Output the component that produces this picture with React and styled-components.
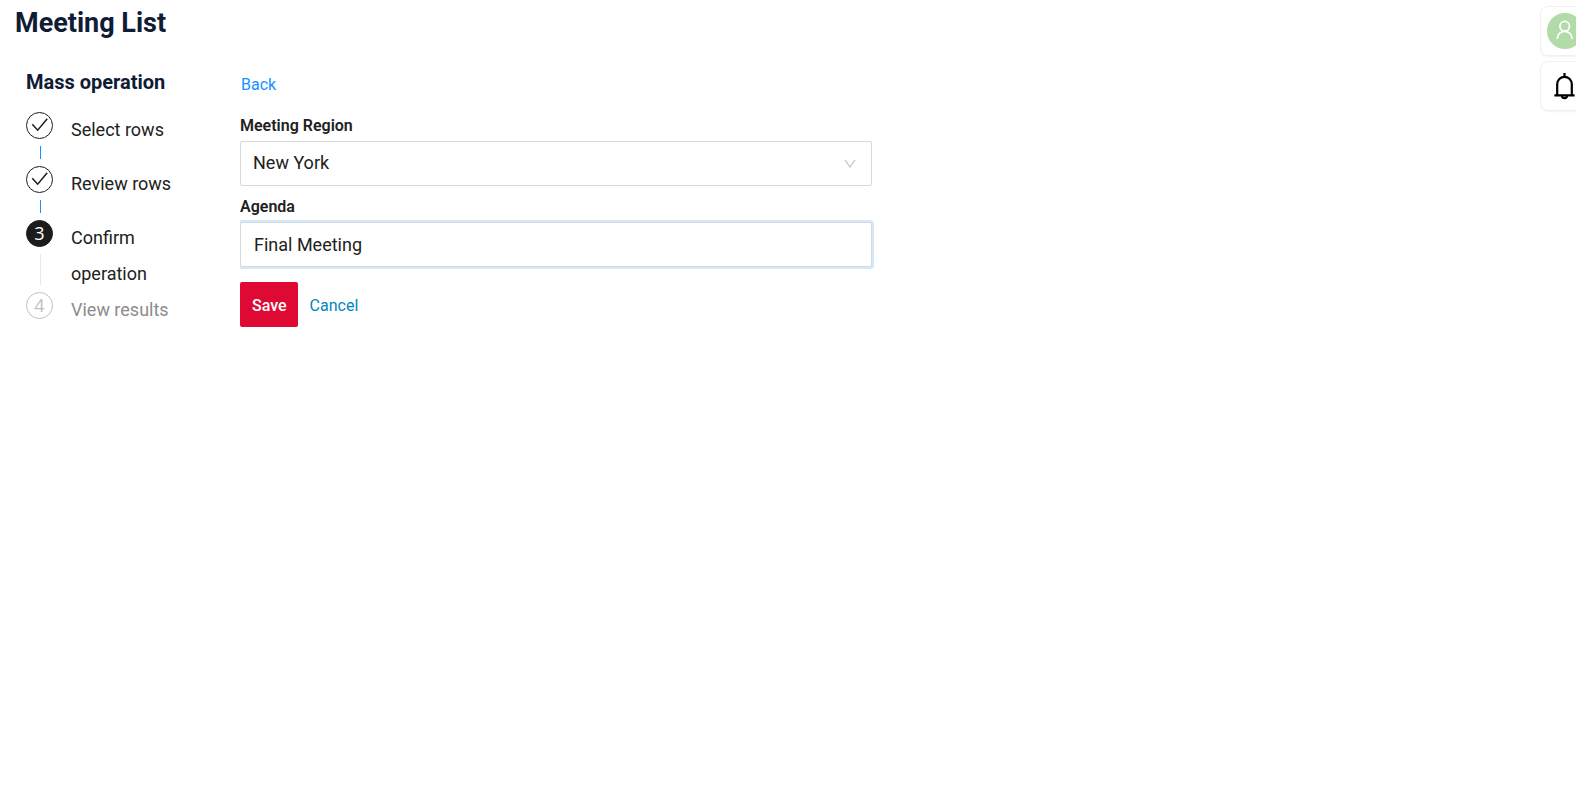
import React, { useState } from 'react';
import styled, { createGlobalStyle } from 'styled-components';

const GlobalStyle = createGlobalStyle`
  *,
  *::before,
  *::after {
    box-sizing: border-box;
  }
  body {
    margin: 0;
    background: #fff;
    color: #212121;
    font-family: Roboto, 'Liberation Sans', sans-serif;
    font-size: 16px;
    line-height: 24px;
  }
`;

const Page = styled.div`
  min-height: 100vh;
  padding: 4px 0 0 15px;
  overflow: hidden;
`;
const Title = styled.h1`
  margin: 0;
  color: #0f1c35;
  font-size: 27px;
  font-weight: 700;
  line-height: 38px;
`;
const Layout = styled.div`
  display: flex;
  align-items: flex-start;
  padding: 24px 80px 24px 11px;
`;
const Sidebar = styled.aside`
  flex: 0 0 214px;
  padding-right: 50px;
`;
const SidebarTitle = styled.h2`
  margin: 0 0 14px;
  color: #0f1c35;
  font-size: 20px;
  font-weight: 700;
  line-height: 32px;
`;
const StepList = styled.ol`
  margin: 0;
  padding: 0;
  list-style: none;
`;
const Step = styled.li`
  display: flex;
  gap: 18px;
  min-height: 54px;
`;
const StepRail = styled.div`
  display: flex;
  flex-direction: column;
  gap: 7px;
  padding-bottom: 7px;
`;
const StepIcon = styled.span`
  display: flex;
  flex: none;
  align-items: center;
  justify-content: center;
  width: 27px;
  height: 27px;
  border: 1px solid ${(props) => (props.$status === 'wait' ? '#bfbfbf' : '#1c1c1c')};
  border-radius: 50%;
  background: ${(props) => (props.$status === 'process' ? '#1c1c1c' : '#fff')};
  color: ${(props) => (props.$status === 'process' ? '#fff' : '#bfbfbf')};
  font-family: 'Open Sans', 'Noto Sans', sans-serif;
  font-size: 18px;
  line-height: 25px;
`;
const StepTail = styled.span`
  flex: 1;
  width: 1px;
  margin-left: 14px;
  background: ${(props) => (props.$done ? '#1890ff' : '#e8e8e8')};
`;
const StepText = styled.span`
  color: ${(props) => (props.$status === 'wait' ? '#8c8c8c' : '#212121')};
  font-size: 18px;
  line-height: 36px;
`;
const MeetingForm = styled.form`
  flex: 1;
  min-width: 0;
  max-width: 634px;
  padding: 7px 2px 0 0;
  overflow: hidden;
`;
const BackLink = styled.a`
  display: block;
  width: fit-content;
  margin: 0 0 17px 1px;
  color: #1890ff;
  text-decoration: none;
`;
const Label = styled.label`
  display: block;
  margin-bottom: 3px;
  font-weight: 600;
`;
const Control = styled.div`
  position: relative;
  margin-bottom: ${(props) => (props.$last ? '15px' : '9px')};
`;
const Select = styled.select`
  display: block;
  width: 100%;
  height: 45px;
  padding: 0 40px 2px 12px;
  border: 1px solid #d9d9d9;
  border-radius: 2px;
  outline: none;
  appearance: none;
  background: #fff;
  color: #212121;
  font-family: inherit;
  font-size: 18px;
`;
const Chevron = styled.svg`
  position: absolute;
  top: 17px;
  right: 16px;
  color: #bfbfbf;
  pointer-events: none;
`;
const Input = styled.input`
  display: block;
  width: 100%;
  height: 45px;
  padding: 0 13px;
  border: 1px solid #d9d9d9;
  border-radius: 2px;
  outline: none;
  box-shadow: 0 0 0 2px rgba(24, 144, 255, 0.2);
  color: #212121;
  font-family: inherit;
  font-size: 18px;
`;
const Actions = styled.div`
  display: flex;
  align-items: center;
  gap: 12px;
`;
const SaveButton = styled.button`
  height: 45px;
  padding: 2px 11px 0 12px;
  border: 0;
  border-radius: 2px;
  background: #df0a34;
  color: #fff;
  font-family: inherit;
  font-size: 16px;
  font-weight: 500;
  cursor: pointer;
`;
const CancelButton = styled.button`
  padding: 2px 0 0;
  border: 0;
  background: none;
  color: #0086bf;
  font-family: inherit;
  font-size: 16px;
  line-height: 24px;
  cursor: pointer;
`;
const Dock = styled.div`
  position: fixed;
  top: 6px;
  right: -14px;
  display: grid;
  gap: 5px;
`;
const DockButton = styled.button`
  display: flex;
  align-items: center;
  width: 50px;
  height: 50px;
  padding: 0 6px;
  border: 1px solid #f0f0f0;
  border-radius: 8px;
  background: #fff;
  box-shadow: 0 1px 2px rgba(0, 0, 0, 0.05);
  color: #000;
  cursor: pointer;
`;
const DockIcon = styled.svg`
  flex: none;
`;

const steps = [
  { title: 'Select rows', status: 'finish' },
  { title: 'Review rows', status: 'finish' },
  { title: 'Confirm operation', status: 'process' },
  { title: 'View results', status: 'wait' },
];

const CheckIcon = () => (
  <svg width="17" height="15" viewBox="0 0 17 15" fill="none" aria-label="done">
    <path d="M1.3 6.2L6.7 12.2 16.2 0.8" stroke="#1c1c1c" strokeWidth="1.5" />
  </svg>
);

const AvatarIcon = () => (
  <DockIcon width="36" height="36" viewBox="0 0 36 36" fill="none" stroke="#fff" strokeWidth="1.8">
    <circle cx="18" cy="18" r="18" fill="#b1dca8" stroke="none" />
    <circle cx="17.7" cy="13.2" r="4.8" />
    <path d="M10.2 26c.4-4.7 3.5-7.7 7.5-7.7s7.1 3 7.5 7.7" />
  </DockIcon>
);

const BellIcon = () => (
  <DockIcon
    width="36"
    height="28"
    viewBox="0 0 36 28"
    fill="none"
    stroke="currentColor"
    strokeWidth="2.2"
  >
    <path d="M10.2 23V12.2a7.3 7.3 0 0 1 14.6 0V23" />
    <path d="M7.4 23.3h20.2M17.5 1v4" />
    <path d="M14.9 23.5a2.6 2.6 0 0 0 5.2 0" />
  </DockIcon>
);

const StepItem = ({ step, number, last }) => (
  <Step aria-current={step.status === 'process' ? 'step' : undefined}>
    <StepRail>
      <StepIcon $status={step.status}>{step.status === 'finish' ? <CheckIcon /> : number}</StepIcon>
      {!last && <StepTail $done={step.status === 'finish'} />}
    </StepRail>
    <StepText $status={step.status}>{step.title}</StepText>
  </Step>
);

const App = () => {
  const [region, setRegion] = useState('New York');
  const [agenda, setAgenda] = useState('Final Meeting');

  return (
    <Page>
      <GlobalStyle />
      <Title>Meeting List</Title>
      <Layout>
        <Sidebar>
          <SidebarTitle>Mass operation</SidebarTitle>
          <StepList>
            {steps.map((step, index) => (
              <StepItem
                key={step.title}
                step={step}
                number={index + 1}
                last={index === steps.length - 1}
              />
            ))}
          </StepList>
        </Sidebar>
        <MeetingForm onSubmit={(e) => e.preventDefault()}>
          <BackLink href="#back">Back</BackLink>
          <Label htmlFor="region">Meeting Region</Label>
          <Control>
            <Select id="region" value={region} onChange={(e) => setRegion(e.target.value)}>
              <option>New York</option>
            </Select>
            <Chevron width="12" height="12" viewBox="0 0 12 12" fill="none" stroke="currentColor">
              <path d="M1 2l5 7 5-7" strokeWidth="1.2" />
            </Chevron>
          </Control>
          <Label htmlFor="agenda">Agenda</Label>
          <Control $last>
            <Input id="agenda" value={agenda} onChange={(e) => setAgenda(e.target.value)} />
          </Control>
          <Actions>
            <SaveButton type="submit">Save</SaveButton>
            <CancelButton type="button">Cancel</CancelButton>
          </Actions>
        </MeetingForm>
      </Layout>
      <Dock>
        <DockButton type="button" aria-label="Profile">
          <AvatarIcon />
        </DockButton>
        <DockButton type="button" aria-label="Notifications">
          <BellIcon />
        </DockButton>
      </Dock>
    </Page>
  );
};

export default App;
